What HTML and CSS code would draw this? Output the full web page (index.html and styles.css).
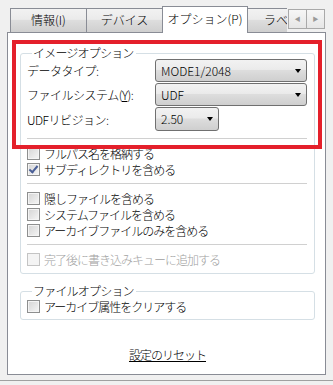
FILE: index.html
```html
<!DOCTYPE html>
<html lang="ja">
<head>
  <meta charset="UTF-8" />
  <title>プロパティ</title>
  <link rel="stylesheet" href="styles.css">
</head>
<body>
  <div class="dialog">
    <div class="tabs">
      <div class="tab">情報(I)</div>
      <div class="tab">デバイス</div>
      <div class="tab selected">オプション(P)</div>
      <div class="tab clipped">ラベル</div>
      <div class="tab-scroll">
        <span class="scroll-btn">&#9664;</span>
        <span class="scroll-btn">&#9654;</span>
      </div>
    </div>

    <div class="panel">
      <fieldset class="group">
        <legend>イメージオプション</legend>
        <div class="field-grid">
          <span class="label">データタイプ:</span>
          <div class="combo">MODE1/2048<i class="arrow"></i></div>
          <span class="label">ファイルシステム(<u>Y</u>):</span>
          <div class="combo">UDF<i class="arrow"></i></div>
          <span class="label">UDFリビジョン:</span>
          <div class="combo small">2.50<i class="arrow"></i></div>
        </div>
        <hr class="sep first">
        <label class="check"><span class="box"></span>フルパス名を格納する</label>
        <label class="check"><span class="box checked"></span>サブディレクトリを含める</label>
        <hr class="sep">
        <label class="check"><span class="box"></span>隠しファイルを含める</label>
        <label class="check"><span class="box"></span>システムファイルを含める</label>
        <label class="check"><span class="box"></span>アーカイブファイルのみを含める</label>
        <hr class="sep">
        <label class="check disabled"><span class="box"></span>完了後に書き込みキューに追加する</label>
      </fieldset>

      <fieldset class="group second">
        <legend>ファイルオプション</legend>
        <label class="check"><span class="box"></span>アーカイブ属性をクリアする</label>
      </fieldset>

      <div class="reset"><a href="#">設定のリセット</a></div>

      <!-- annotation frame -->
      <div class="highlight"></div>
    </div>
    <div class="bottom-edge"></div>
  </div>
</body>
</html>
```

FILE: styles.css
```css
body {
  margin: 0;
  background: #f0f0f0;
  font-family: "Noto Sans CJK JP", "Noto Sans", sans-serif;
  font-size: 11px;
  font-weight: 300;
  color: #000;
}
.dialog {
  width: 333px;
  height: 385px;
  overflow: hidden;
}
.tabs {
  position: relative;
  display: flex;
  align-items: flex-end;
  height: 32px;
  padding-left: 10px;
}
.tab {
  box-sizing: border-box;
  width: 77px;
  height: 24px;
  margin-right: -1px;
  border: 1px solid #898c95;
  border-bottom: none;
  background: linear-gradient(#f2f2f2, #ebebeb 45%, #dddddd 50%, #cfcfcf);
  text-align: center;
  line-height: 22px;
  font-size: 12px;
}
.tab.selected {
  position: relative;
  z-index: 2;
  width: 86px;
  height: 27px;
  margin-bottom: -1px;
  background: #fff;
  line-height: 24px;
}
.tab.clipped {
  width: 40px;
  border-right: none;
  overflow: hidden;
  white-space: nowrap;
  text-align: left;
  padding-left: 16px;
}
.tab-scroll {
  position: absolute;
  left: 288px;
  top: 9px;
  display: flex;
}
.scroll-btn {
  box-sizing: border-box;
  width: 19px;
  height: 20px;
  border: 1px solid #a9a9a9;
  margin-right: -1px;
  background: linear-gradient(#f6f6f6, #e6e6e6);
  color: #9a9a9a;
  font-size: 6px;
  line-height: 18px;
  text-align: center;
}
.panel {
  position: relative;
  box-sizing: border-box;
  width: 319px;
  height: 343px;
  margin-left: 7px;
  border: 1px solid #898c95;
  background: #fff;
  padding: 14px 10px 0 12px;
}
.group {
  margin: 0;
  padding: 0 7px 6px 6px;
  border: 1px solid #d5dfe5;
  border-radius: 3px;
  min-inline-size: 0;
}
.group legend {
  margin-left: 5px;
  padding: 0 2px 0 1px;
  line-height: 12px;
  font-size: 12px;
  letter-spacing: -0.8px;
}
.group.second {
  margin-top: 11px;
  padding-top: 1px;
  padding-bottom: 5px;
}
.field-grid {
  display: grid;
  grid-template-columns: 128px 1fr;
  row-gap: 1px;
  align-items: center;
}
.label {
  font-size: 12px;
  letter-spacing: -0.5px;
}
.combo {
  position: relative;
  box-sizing: border-box;
  height: 23px;
  border: 1px solid #707070;
  border-radius: 3px;
  background: linear-gradient(#f2f2f2, #ebebeb 45%, #dddddd 50%, #cfcfcf);
  padding-left: 5px;
  line-height: 21px;
  font-size: 12px;
}
.combo.small {
  width: 64px;
  height: 24px;
}
.combo .arrow {
  position: absolute;
  right: 5px;
  top: 9px;
  width: 0;
  height: 0;
  border-left: 3.5px solid transparent;
  border-right: 3.5px solid transparent;
  border-top: 4px solid #000;
}
.sep {
  margin: 6px 0;
  border: none;
  border-top: 1px solid #d0d0d0;
}
.sep.first {
  margin-top: 7px;
}
.check {
  display: flex;
  align-items: center;
  height: 16px;
  font-size: 12px;
  letter-spacing: -1px;
}
.box {
  box-sizing: border-box;
  width: 13px;
  height: 13px;
  margin-right: 4px;
  border: 1px solid #8e8f8f;
  background: linear-gradient(135deg, #d4d4d4, #f6f6f6);
  box-shadow: inset 0 0 0 1px #f4f4f4;
  flex: none;
  position: relative;
}
.box.checked::after {
  content: "";
  position: absolute;
  left: 3px;
  top: 0px;
  width: 3px;
  height: 7px;
  border-right: 2px solid #4a5f97;
  border-bottom: 2px solid #4a5f97;
  transform: rotate(40deg);
}
.check.disabled {
  color: #a0a0a0;
}
.check.disabled .box {
  border-color: #c4c4c4;
  background: #f4f4f4;
}
.reset {
  margin-top: 26px;
  text-align: center;
  font-size: 12px;
  letter-spacing: -1px;
}
.reset a {
  color: #000;
}
.highlight {
  position: absolute;
  left: 4px;
  top: 7px;
  width: 310px;
  height: 109px;
  box-sizing: border-box;
  border: 4px solid #e4202b;
}
.bottom-edge {
  margin-top: 5px;
  border-top: 1px solid #a0a0a0;
}
```
